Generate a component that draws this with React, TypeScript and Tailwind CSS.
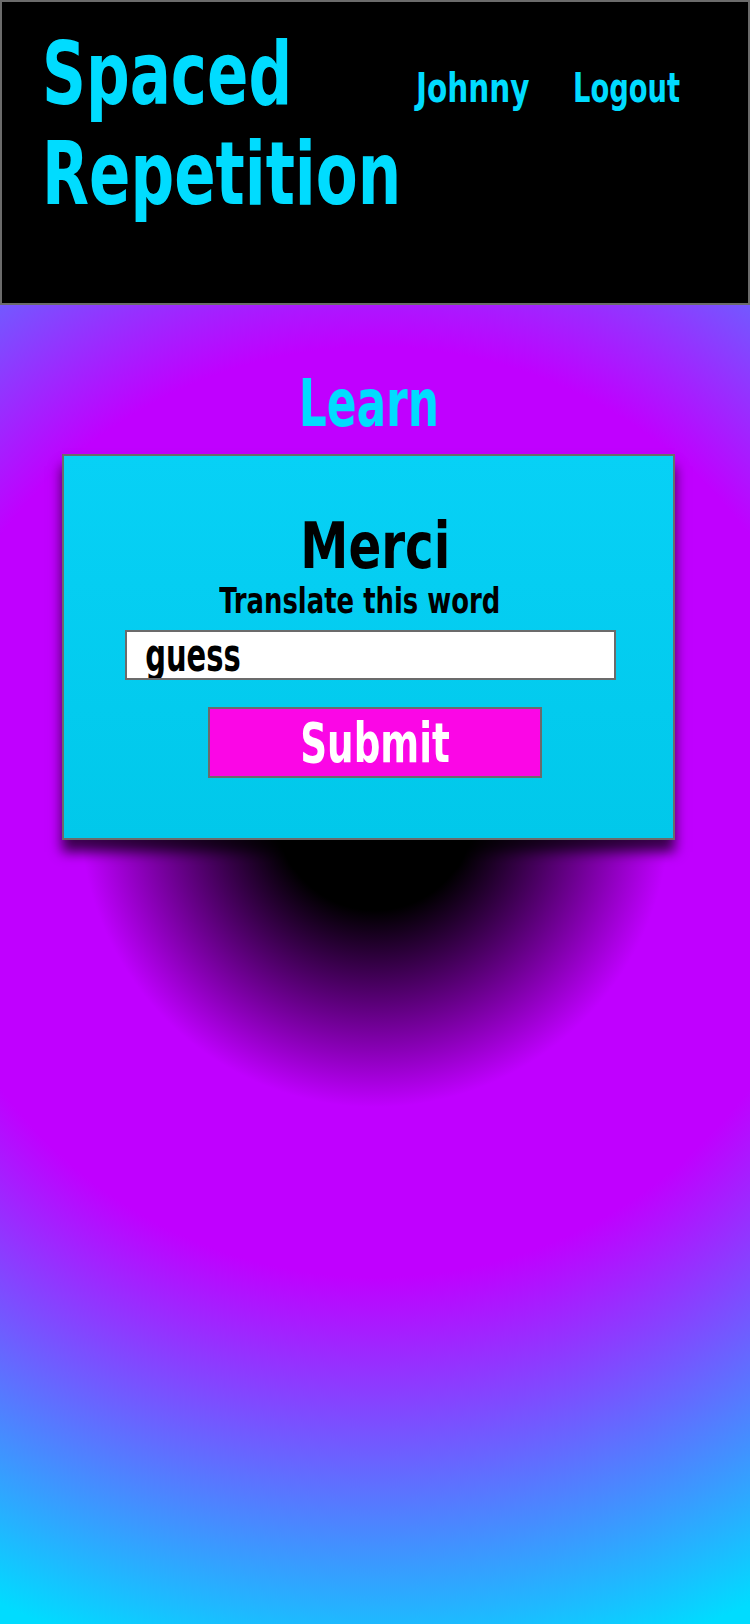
const font = "font-['DejaVu_Sans_Condensed','DejaVu_Sans',sans-serif]"

export default function App() {
  return (
    <div
      className={`min-h-screen bg-[radial-gradient(circle_at_50%_50%,#000_11%,#c000ff_33%,#c000ff_52%,#00dcff_98%)] ${font}`}
    >
      <header className="flex h-[305px] border-2 border-[#6b6b6b] bg-black pl-10 pt-[22px]">
        <h1 className="w-[374px] origin-left scale-x-[0.78] text-[87px] font-bold leading-[100px] text-[#00dcff]">
          Spaced Repetition
        </h1>
        <nav className="mt-[40px] flex gap-[19px] text-[40px] font-bold leading-[48px] text-[#00dcff]">
          <a href="#" className="inline-block origin-left scale-x-[0.82]">Johnny</a>
          <a href="#" className="inline-block origin-left scale-x-[0.76]">Logout</a>
        </nav>
      </header>

      <main className="ml-[62px] w-[613px] pt-[66px]">
        <h2 className="text-center text-[66px] font-bold leading-none text-[#00dcff]">
          <span className="inline-block scale-x-[0.74]">Learn</span>
        </h2>

        <section className="mt-[17px] flex flex-col items-center border-2 border-[#6b6b6b] bg-linear-to-b from-[#07d1f6] to-[#01c8ea] pb-[60px] pt-[58px] shadow-[0_12px_12px_rgba(0,0,0,0.7)]">
          <h3 className="ml-[13px] inline-block scale-x-[0.84] text-[64px] font-bold leading-none text-black">Merci</h3>
          <p className="mr-[18px] mt-[5px] inline-block scale-x-[0.8] text-[36px] font-bold leading-none text-black">
            Translate this word
          </p>
          <div className="ml-[4px] mt-[11px] h-[50px] w-[491px] overflow-hidden border-2 border-[#6b6b6b] bg-white">
            <input
              defaultValue="guess"
              className="h-[46px] w-[696px] origin-left scale-x-[0.7] bg-transparent pl-[26px] text-[46px] font-bold leading-[46px] text-black outline-none"
            />
          </div>
          <button className="ml-[13px] mt-[27px] h-[71px] w-[334px] border-2 border-[#6b6b6b] bg-[#fb06e6] text-[56px] font-bold leading-[67px] text-white">
            <span className="inline-block scale-x-[0.74]">Submit</span>
          </button>
        </section>
      </main>
    </div>
  )
}
